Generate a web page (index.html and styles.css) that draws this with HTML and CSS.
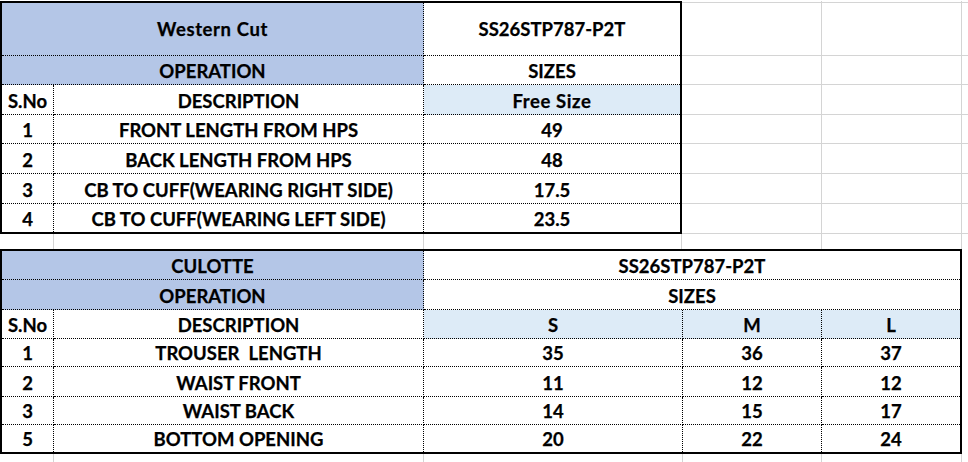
FILE: index.html
```html
<!DOCTYPE html>
<html>
<head>
<meta charset="utf-8">
<link rel="stylesheet" href="styles.css">
</head>
<body>
<div class="sheet">
  <div class="band">
    <div class="tbl tbl-a">
      <div class="c span2 blue mid wide">Western Cut</div>
      <div class="c last mid">SS26STP787-P2T</div>
      <div class="c span2 blue">OPERATION</div>
      <div class="c last">SIZES</div>
      <div class="c">S.No</div>
      <div class="c">DESCRIPTION</div>
      <div class="c last pale wide">Free Size</div>
      <div class="c">1</div>
      <div class="c">FRONT LENGTH FROM HPS</div>
      <div class="c last">49</div>
      <div class="c">2</div>
      <div class="c">BACK LENGTH FROM HPS</div>
      <div class="c last">48</div>
      <div class="c">3</div>
      <div class="c">CB TO CUFF(WEARING RIGHT SIDE)</div>
      <div class="c last">17.5</div>
      <div class="c bot">4</div>
      <div class="c bot">CB TO CUFF(WEARING LEFT SIDE)</div>
      <div class="c bot last">23.5</div>
    </div>
    <div class="filler">
      <div class="g"></div><div class="g"></div><div class="g end"></div>
      <div class="g"></div><div class="g"></div><div class="g end"></div>
      <div class="g"></div><div class="g"></div><div class="g end"></div>
      <div class="g"></div><div class="g"></div><div class="g end"></div>
      <div class="g"></div><div class="g"></div><div class="g end"></div>
      <div class="g"></div><div class="g"></div><div class="g end"></div>
      <div class="g"></div><div class="g"></div><div class="g end"></div>
      <div class="g"></div><div class="g"></div><div class="g end"></div>
    </div>
  </div>
  <div class="gap">
    <div class="v"></div><div class="v"></div><div class="v"></div><div class="v"></div><div class="v"></div><div></div>
  </div>
  <div class="band">
    <div class="tbl tbl-b">
      <div class="c span2 blue">CULOTTE</div>
      <div class="c span3 last">SS26STP787-P2T</div>
      <div class="c span2 blue">OPERATION</div>
      <div class="c span3 last">SIZES</div>
      <div class="c">S.No</div>
      <div class="c">DESCRIPTION</div>
      <div class="c pale">S</div>
      <div class="c pale">M</div>
      <div class="c last pale">L</div>
      <div class="c">1</div>
      <div class="c">TROUSER  LENGTH</div>
      <div class="c">35</div>
      <div class="c">36</div>
      <div class="c last">37</div>
      <div class="c">2</div>
      <div class="c">WAIST FRONT</div>
      <div class="c">11</div>
      <div class="c">12</div>
      <div class="c last">12</div>
      <div class="c">3</div>
      <div class="c">WAIST BACK</div>
      <div class="c">14</div>
      <div class="c">15</div>
      <div class="c last">17</div>
      <div class="c bot">5</div>
      <div class="c bot">BOTTOM OPENING</div>
      <div class="c bot">20</div>
      <div class="c bot">22</div>
      <div class="c bot last">24</div>
    </div>
  </div>
  <div class="tail">
    <div class="v"></div><div class="v"></div><div class="v"></div><div class="v"></div><div class="v"></div><div></div>
  </div>
</div>
</body>
</html>
```
FILE: styles.css
```css
html, body {
  margin: 0;
  padding: 0;
  background: #ffffff;
}

.sheet {
  width: 968px;
  height: 462px;
  overflow: hidden;
  padding-top: 1px;
  box-sizing: border-box;
  display: flex;
  flex-direction: column;
  font-family: "Lato", "Liberation Sans", sans-serif;
  font-weight: 700;
  font-size: 18.5px;
  color: #000;
  -webkit-text-stroke: 0.25px #000;
}

.band {
  display: flex;
  align-items: flex-start;
}

.tbl {
  display: grid;
  border: 2px solid #000;
  flex: none;
}

.tbl-a {
  grid-template-columns: 52px 370px 256px;
  grid-template-rows: 53px 29px 30px 29px 30px 30px 28px;
}

.tbl-b {
  grid-template-columns: 52px 370px 259px 139px 138px;
  grid-template-rows: 29px 30px 29px 28px 30px 28px 27px;
}

.c {
  box-sizing: border-box;
  border-right: 1px dotted #000;
  border-bottom: 1px dotted #000;
  display: flex;
  align-items: flex-end;
  justify-content: center;
  padding-bottom: 4px;
  line-height: 1;
  white-space: pre;
  background: #fff;
}

.c.last { border-right: none; }
.c.bot { border-bottom: none; }
.c.span2 { grid-column: span 2; }
.c.span3 { grid-column: span 3; }
.c.mid { align-items: center; padding-bottom: 0; }
.c.wide { letter-spacing: 0.6px; }

.blue { background: #b4c6e7; }
.c.pale { background: #ddebf7; }

.filler {
  flex: 1;
  display: grid;
  grid-template-columns: 140px 140px 1fr;
  grid-template-rows: 2px 53px 29px 30px 29px 30px 30px 30px;
}

.g {
  box-sizing: border-box;
  border-right: 1px solid #d4d4d4;
  border-bottom: 1px solid #d4d4d4;
}

.g.end { border-right: none; }

.gap, .tail {
  display: grid;
  grid-template-columns: 54px 370px 258px 140px 140px 1fr;
}

.gap { height: 16px; }
.tail { height: 8px; grid-template-columns: 54px 370px 259px 139px 140px 1fr; }

.v {
  box-sizing: border-box;
  border-right: 1px solid #d4d4d4;
}
```
